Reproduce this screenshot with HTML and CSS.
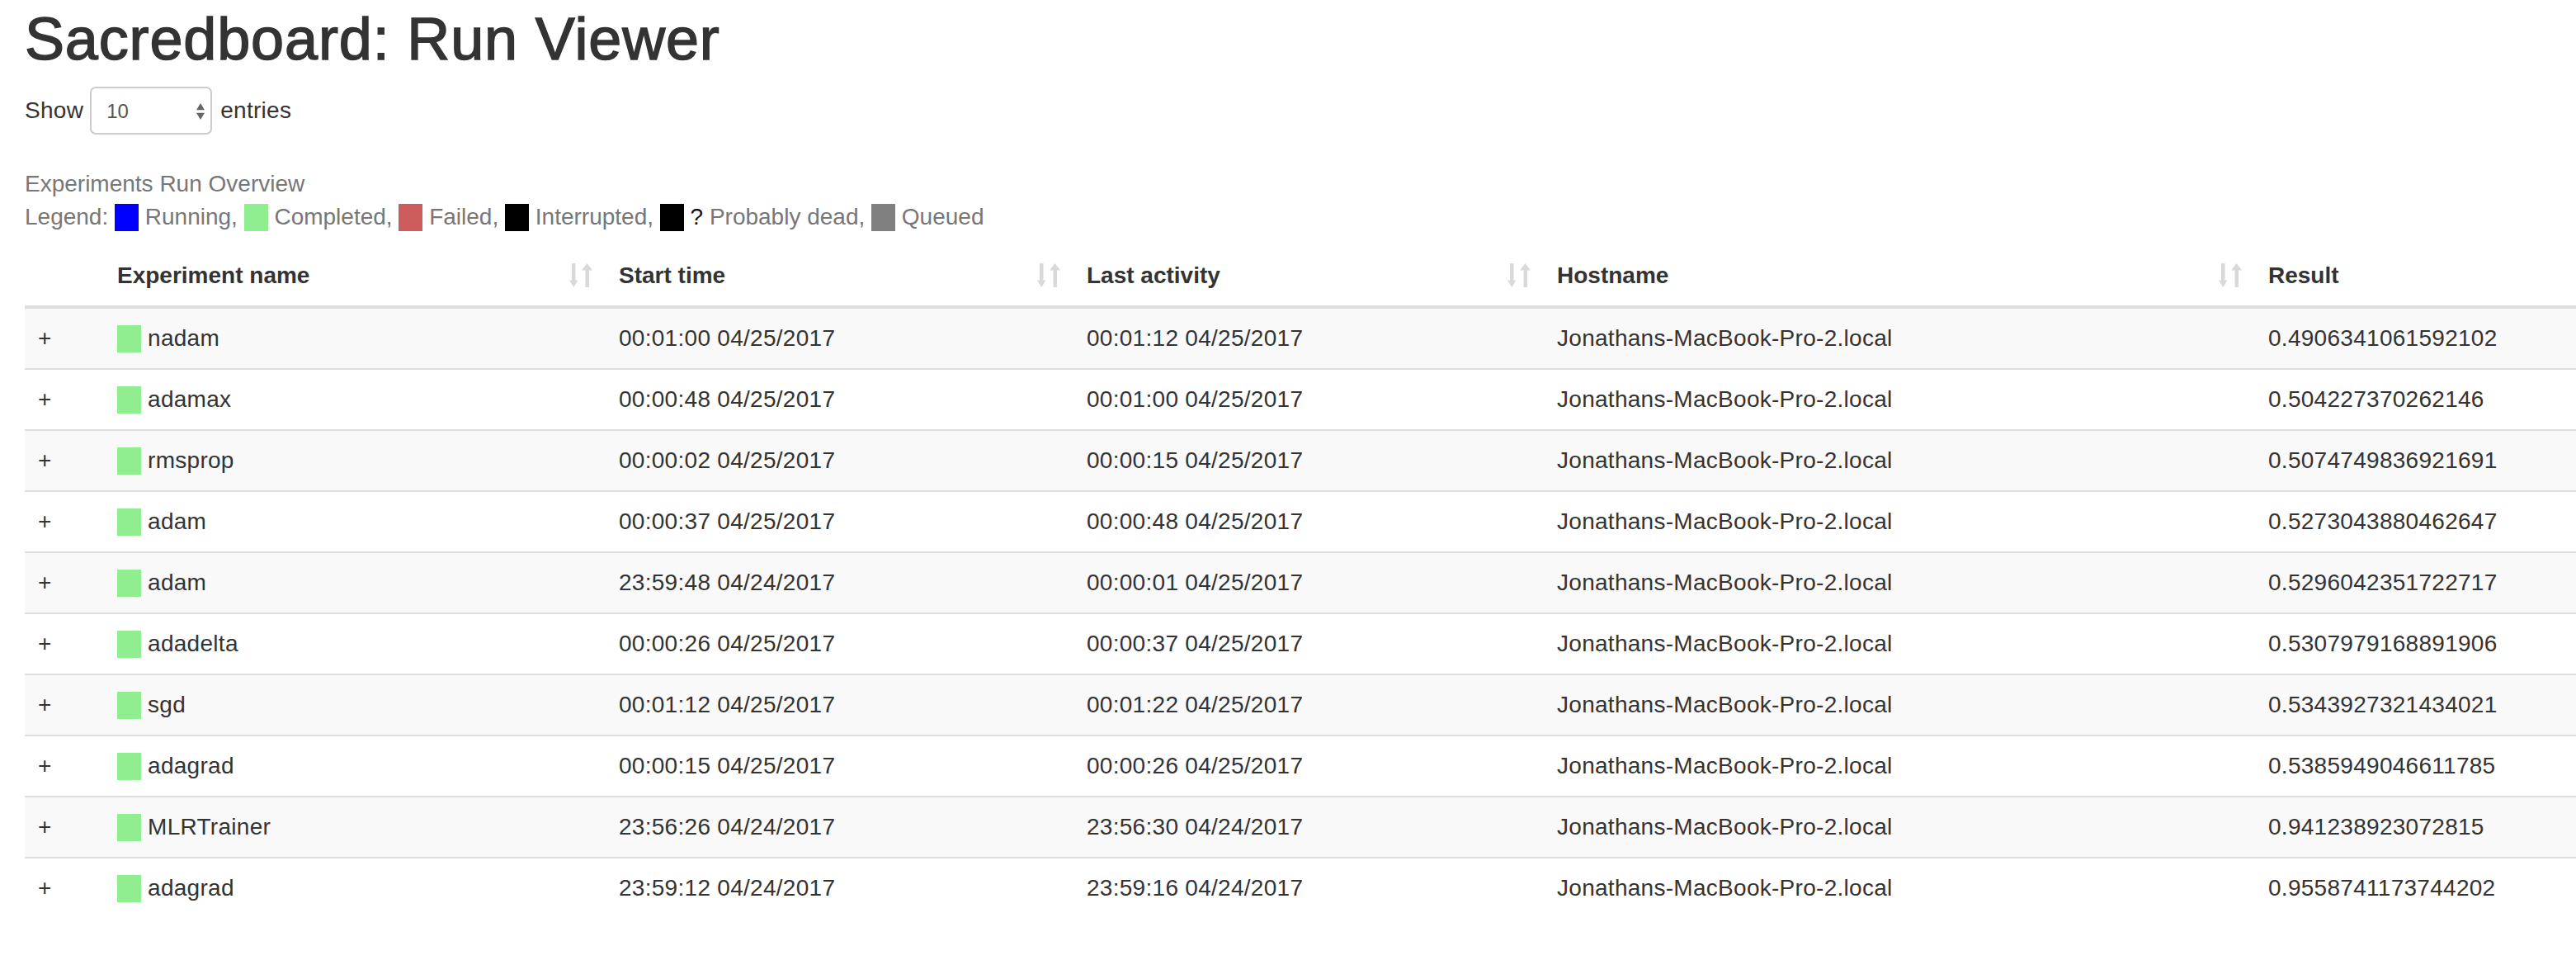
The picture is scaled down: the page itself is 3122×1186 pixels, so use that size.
FILE: index.html
```html
<!DOCTYPE html>
<html lang="en">
<head>
<meta charset="utf-8">
<title>Sacredboard: Run Viewer</title>
<link rel="stylesheet" href="styles.css">
</head>
<body>
<div class="page">
  <h1 class="title">Sacredboard: Run Viewer</h1>

  <div class="length">
    <span class="length-label">Show</span>
    <span class="select-wrap">
      <select class="select" aria-label="entries per page"><option>10</option><option>25</option><option>50</option><option>100</option></select>
      <svg class="select-arrows" width="10" height="20" viewBox="0 0 10 20" aria-hidden="true">
        <polygon points="0,8.3 10,8.3 5,0" />
        <polygon points="0,11.7 10,11.7 5,20" />
      </svg>
    </span>
    <span class="length-label">entries</span>
  </div>

  <div class="overview">Experiments Run Overview</div>
  <div class="legend">Legend: <span class="sq sq-running"></span> Running, <span class="sq sq-completed"></span> Completed, <span class="sq sq-failed"></span> Failed, <span class="sq sq-interrupted"></span> Interrupted, <span class="sq sq-dead"></span> <span class="qmark">?</span> Probably dead, <span class="sq sq-queued"></span> Queued</div>

  <table class="runs">
    <colgroup>
      <col class="c-expand">
      <col class="c-name">
      <col class="c-start">
      <col class="c-last">
      <col class="c-host">
      <col class="c-result">
    </colgroup>
    <thead>
      <tr>
        <th></th>
        <th class="sortable">Experiment name<svg class="sort-icon" width="28" height="29" viewBox="0 0 28 29" aria-hidden="true"><rect x="3" y="0" width="4.5" height="21"/><polygon points="0,20.5 10.5,20.5 5.25,29"/><polygon points="15,8.5 28,8.5 21.5,0"/><rect x="19.5" y="8" width="4.5" height="21"/></svg></th>
        <th class="sortable">Start time<svg class="sort-icon" width="28" height="29" viewBox="0 0 28 29" aria-hidden="true"><rect x="3" y="0" width="4.5" height="21"/><polygon points="0,20.5 10.5,20.5 5.25,29"/><polygon points="15,8.5 28,8.5 21.5,0"/><rect x="19.5" y="8" width="4.5" height="21"/></svg></th>
        <th class="sortable">Last activity<svg class="sort-icon" width="28" height="29" viewBox="0 0 28 29" aria-hidden="true"><rect x="3" y="0" width="4.5" height="21"/><polygon points="0,20.5 10.5,20.5 5.25,29"/><polygon points="15,8.5 28,8.5 21.5,0"/><rect x="19.5" y="8" width="4.5" height="21"/></svg></th>
        <th class="sortable">Hostname<svg class="sort-icon" width="28" height="29" viewBox="0 0 28 29" aria-hidden="true"><rect x="3" y="0" width="4.5" height="21"/><polygon points="0,20.5 10.5,20.5 5.25,29"/><polygon points="15,8.5 28,8.5 21.5,0"/><rect x="19.5" y="8" width="4.5" height="21"/></svg></th>
        <th class="sortable">Result<svg class="sort-icon" width="28" height="29" viewBox="0 0 28 29" aria-hidden="true"><rect x="3" y="0" width="4.5" height="21"/><polygon points="0,20.5 10.5,20.5 5.25,29"/><polygon points="15,8.5 28,8.5 21.5,0"/><rect x="19.5" y="8" width="4.5" height="21"/></svg></th>
      </tr>
    </thead>
    <tbody>
      <tr><td>+</td><td><span class="sq sq-completed"></span> nadam</td><td>00:01:00 04/25/2017</td><td>00:01:12 04/25/2017</td><td>Jonathans-MacBook-Pro-2.local</td><td>0.4906341061592102</td></tr>
      <tr><td>+</td><td><span class="sq sq-completed"></span> adamax</td><td>00:00:48 04/25/2017</td><td>00:01:00 04/25/2017</td><td>Jonathans-MacBook-Pro-2.local</td><td>0.504227370262146</td></tr>
      <tr><td>+</td><td><span class="sq sq-completed"></span> rmsprop</td><td>00:00:02 04/25/2017</td><td>00:00:15 04/25/2017</td><td>Jonathans-MacBook-Pro-2.local</td><td>0.5074749836921691</td></tr>
      <tr><td>+</td><td><span class="sq sq-completed"></span> adam</td><td>00:00:37 04/25/2017</td><td>00:00:48 04/25/2017</td><td>Jonathans-MacBook-Pro-2.local</td><td>0.5273043880462647</td></tr>
      <tr><td>+</td><td><span class="sq sq-completed"></span> adam</td><td>23:59:48 04/24/2017</td><td>00:00:01 04/25/2017</td><td>Jonathans-MacBook-Pro-2.local</td><td>0.5296042351722717</td></tr>
      <tr><td>+</td><td><span class="sq sq-completed"></span> adadelta</td><td>00:00:26 04/25/2017</td><td>00:00:37 04/25/2017</td><td>Jonathans-MacBook-Pro-2.local</td><td>0.5307979168891906</td></tr>
      <tr><td>+</td><td><span class="sq sq-completed"></span> sgd</td><td>00:01:12 04/25/2017</td><td>00:01:22 04/25/2017</td><td>Jonathans-MacBook-Pro-2.local</td><td>0.5343927321434021</td></tr>
      <tr><td>+</td><td><span class="sq sq-completed"></span> adagrad</td><td>00:00:15 04/25/2017</td><td>00:00:26 04/25/2017</td><td>Jonathans-MacBook-Pro-2.local</td><td>0.5385949046611785</td></tr>
      <tr><td>+</td><td><span class="sq sq-completed"></span> MLRTrainer</td><td>23:56:26 04/24/2017</td><td>23:56:30 04/24/2017</td><td>Jonathans-MacBook-Pro-2.local</td><td>0.941238923072815</td></tr>
      <tr><td>+</td><td><span class="sq sq-completed"></span> adagrad</td><td>23:59:12 04/24/2017</td><td>23:59:16 04/24/2017</td><td>Jonathans-MacBook-Pro-2.local</td><td>0.9558741173744202</td></tr>
    </tbody>
  </table>
</div>
</body>
</html>
```

FILE: styles.css
```css
html, body {
  margin: 0;
  padding: 0;
  overflow: hidden;
  background: #fff;
}

body {
  font-family: "Liberation Sans", Arial, Helvetica, sans-serif;
  font-size: 28px;
  line-height: 40px;
  color: #333;
  letter-spacing: 0.28px;
}

.page {
  padding: 0 30px;
}

.title {
  margin: 8px 0 0;
  font-size: 72px;
  line-height: 79.2px;
  font-weight: 400;
  letter-spacing: 0.85px;
  color: #333;
  -webkit-text-stroke: 1.5px #333;
}

.length {
  display: flex;
  align-items: center;
  column-gap: 8px;
  margin-top: 18px;
  height: 58px;
}

.length-label:last-child {
  margin-left: 2px;
}

.select-wrap {
  position: relative;
  display: block;
  width: 148px;
  height: 58px;
}

.select {
  -webkit-appearance: none;
  appearance: none;
  box-sizing: border-box;
  width: 148px;
  height: 58px;
  margin: 0;
  padding: 0 0 0 18px;
  border: 2px solid #ccc;
  border-radius: 7px;
  background: #fff;
  font-family: "Liberation Sans", Arial, Helvetica, sans-serif;
  font-size: 24px;
  color: #555;
  outline: none;
}

.select-arrows {
  position: absolute;
  right: 9px;
  top: 20px;
  fill: #666;
  pointer-events: none;
}

.overview {
  margin-top: 39.5px;
  color: #777;
  letter-spacing: 0;
}

.legend {
  color: #777;
  letter-spacing: 0;
}

.qmark {
  color: #111;
}

.sq {
  display: inline-block;
  width: 29px;
  height: 33px;
  vertical-align: -8px;
}

.sq-running { background: #0000ff; }
.sq-completed { background: #90ee90; }
.sq-failed { background: #cd5c5c; }
.sq-interrupted { background: #000; }
.sq-dead { background: #000; }
.sq-queued { background: #808080; }

.runs {
  margin-top: 15.5px;
  border-collapse: collapse;
  border-spacing: 0;
  table-layout: fixed;
  width: 3203px;
}

.c-expand { width: 96px; }
.c-name { width: 608px; }
.c-start { width: 567px; }
.c-last { width: 570px; }
.c-host { width: 862px; }
.c-result { width: 500px; }

.runs th,
.runs td {
  padding: 16px;
  line-height: 40px;
  text-align: left;
  white-space: nowrap;
}

.runs th {
  position: relative;
  font-weight: 700;
  letter-spacing: 0;
  vertical-align: bottom;
  border-bottom: 4px solid #ddd;
}

.runs th.sortable {
  padding-right: 60px;
}

.sort-icon {
  position: absolute;
  right: 16px;
  bottom: 22px;
  fill: #d9d9d9;
}

.runs td {
  vertical-align: top;
  border-top: 2px solid #ddd;
}

.runs tbody tr:nth-child(odd) td {
  background: #f9f9f9;
}
```
